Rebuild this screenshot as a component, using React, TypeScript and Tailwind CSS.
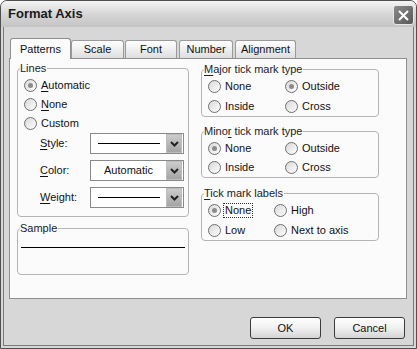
import type { ReactNode } from "react";

const font = { fontFamily: '"Liberation Sans", Arial, sans-serif' };

const Radio = ({ checked }: { checked?: boolean }) => (
  <span className="w-[13px] h-[13px] rounded-full border border-[#6f6f6f] bg-gradient-to-br from-[#d8d8d8] to-white flex items-center justify-center shrink-0">
    {checked && <span className="w-[5px] h-[5px] rounded-full bg-[#8c8c8c]" />}
  </span>
);

const Opt = ({ label, checked, focus, w }: { label: ReactNode; checked?: boolean; focus?: boolean; w?: string }) => (
  <div className={`flex items-center gap-[4px] ${w ?? ""}`}>
    <Radio checked={checked} />
    <span className={focus ? "outline outline-1 outline-dotted outline-[#333] px-px -mx-px leading-[13px]" : "leading-[13px]"}>{label}</span>
  </div>
);

const U = ({ children }: { children: ReactNode }) => <span className="underline underline-offset-2">{children}</span>;

const Group = ({ label, className, children }: { label: ReactNode; className?: string; children: ReactNode }) => (
  <fieldset className={`border border-[#b4b4b4] rounded-[4px] ${className ?? ""}`}>
    <legend className="ml-[2px] px-0 leading-[13px] text-[#222] pr-[1px]">{label}</legend>
    {children}
  </fieldset>
);

const Dropdown = ({ children }: { children: ReactNode }) => (
  <div className="w-[94px] h-[21px] border border-[#8a8a8a] bg-white flex items-center">
    <div className="flex-1 flex items-center justify-center">{children}</div>
    <div className="w-[16px] h-[19px] mr-px bg-gradient-to-b from-[#cccccc] to-[#a4a4a4] border border-[#bcbcbc] flex items-center justify-center">
      <svg width="9" height="6" viewBox="0 0 9 6">
        <path d="M1 1 L4.5 4.5 L8 1" stroke="#222" strokeWidth="2" fill="none" />
      </svg>
    </div>
  </div>
);

const Tab = ({ label, w, active }: { label: string; w: string; active?: boolean }) =>
  active ? (
    <div className={`${w} h-[21px] -mb-px z-10 bg-[#fbfbfb] border border-b-0 border-[#8f8f8f] rounded-t-[3px] flex items-center justify-center`}>
      {label}
    </div>
  ) : (
    <div className={`${w} h-[18px] mt-[2px] bg-gradient-to-b from-white to-[#dedede] border border-b-0 border-[#9a9a9a] rounded-t-[3px] flex items-center justify-center`}>
      {label}
    </div>
  );

const Button = ({ children }: { children: ReactNode }) => (
  <button className="w-[71px] h-[22px] rounded-[3px] border border-[#3c3c3c] bg-gradient-to-b from-white via-[#f0f0f0] to-[#d4d4d4] text-[11px] text-[#111]">
    {children}
  </button>
);

export default function App() {
  return (
    <div style={font} className="w-[417px] h-[349px] bg-[#d7d7d7] border border-[#4f4f4f] rounded-t-[7px] text-[11px] text-[#111] flex flex-col overflow-hidden">
      <div className="h-[26px] shrink-0 bg-gradient-to-b from-[#f4f4f4] via-[#d6d6d6] to-[#c4c4c4] flex items-center justify-between pl-[7px] pr-[2px]">
        <span className="text-[13px] font-bold text-[#1a1a1a]">Format Axis</span>
        <div className="w-[21px] h-[20px] mt-[2px] rounded-[3px] border border-[#e8e8e8] bg-gradient-to-br from-[#8a8a8a] to-[#5a5a5a] flex items-center justify-center">
          <svg width="11" height="11" viewBox="0 0 11 11">
            <path d="M1 1 L10 10 M10 1 L1 10" stroke="white" strokeWidth="2" />
          </svg>
        </div>
      </div>
      <div className="flex-1 mx-[2px] mb-[2px] border-x border-b border-[#7a7a7a] flex flex-col pt-[11px] px-[5px]">
        <div className="flex items-end h-[20px] pl-[1px]">
          <Tab label="Patterns" w="w-[61px]" active />
          <Tab label="Scale" w="w-[53px]" />
          <div className="w-px" />
          <Tab label="Font" w="w-[52px]" />
          <div className="w-[2px]" />
          <Tab label="Number" w="w-[54px]" />
          <div className="w-[2px]" />
          <Tab label="Alignment" w="w-[61px]" />
        </div>
        <div className="w-[398px] h-[241px] border border-[#8f8f8f] bg-[#fbfbfb] flex pl-[7px] gap-[12px]">
          <div className="w-[172px] flex flex-col mt-[3px]">
            <Group label="Lines" className="pb-[8px]">
              <div className="pl-[6px] flex flex-col">
                <div className="h-[19px] flex items-center mt-px"><Opt checked label={<><U>A</U>utomatic</>} /></div>
                <div className="h-[19px] flex items-center"><Opt label={<><U>N</U>one</>} /></div>
                <div className="h-[19px] flex items-center"><Opt label="Custom" /></div>
              </div>
              <div className="flex flex-col gap-[6px] pl-[22px]">
                <div className="flex items-center">
                  <span className="w-[50px]"><U>S</U>tyle:</span>
                  <Dropdown><div className="w-[62px] h-px bg-black" /></Dropdown>
                </div>
                <div className="flex items-center">
                  <span className="w-[50px]"><U>C</U>olor:</span>
                  <Dropdown><span>Automatic</span></Dropdown>
                </div>
                <div className="flex items-center">
                  <span className="w-[50px]"><U>W</U>eight:</span>
                  <Dropdown><div className="w-[62px] h-px bg-black" /></Dropdown>
                </div>
              </div>
            </Group>
            <Group label="Sample" className="mt-[5px] h-[53px]">
              <div className="mx-[3px] mt-[12px] h-px bg-black" />
            </Group>
          </div>
          <div className="w-[178px] flex flex-col mt-[4px]">
            <Group label={<><U>M</U>ajor tick mark type</>}>
              <div className="pl-[6px] flex flex-col">
                <div className="h-[20px] flex items-center">
                  <Opt w="w-[77px]" label="None" />
                  <Opt checked label="Outside" />
                </div>
                <div className="h-[20px] flex items-center">
                  <Opt w="w-[77px]" label="Inside" />
                  <Opt label="Cross" />
                </div>
              </div>
            </Group>
            <Group label={<>Mino<U>r</U> tick mark type</>} className="mt-[8px]">
              <div className="pl-[6px] flex flex-col">
                <div className="h-[20px] flex items-center">
                  <Opt w="w-[77px]" checked label="None" />
                  <Opt label="Outside" />
                </div>
                <div className="h-[19px] flex items-center">
                  <Opt w="w-[77px]" label="Inside" />
                  <Opt label="Cross" />
                </div>
              </div>
            </Group>
            <Group label={<><U>T</U>ick mark labels</>} className="mt-[9px]">
              <div className="pl-[6px] flex flex-col">
                <div className="h-[21px] flex items-center">
                  <Opt w="w-[66px]" checked focus label="None" />
                  <Opt label="High" />
                </div>
                <div className="h-[19px] flex items-center">
                  <Opt w="w-[66px]" label="Low" />
                  <Opt label="Next to axis" />
                </div>
              </div>
            </Group>
          </div>
        </div>
        <div className="flex justify-end gap-[13px] mt-[18px] pr-[3px]">
          <Button>OK</Button>
          <Button>Cancel</Button>
        </div>
      </div>
    </div>
  );
}
